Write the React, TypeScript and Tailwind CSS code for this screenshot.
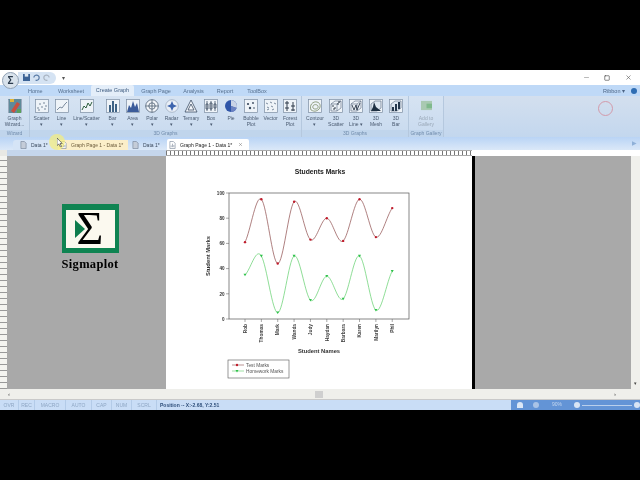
import { Minus, Square, X } from 'lucide-react';

const menuTabs = [
  { label: 'Home', w: 'w-[34px]', pl: 'pl-[18px]' },
  { label: 'Worksheet', w: 'w-[38px]', pl: '' },
];

function RibbonIcon({ kind }: { kind: string }) {
  const line = '#4a5f78';
  const frame = kind === 'pie' || kind === 'polar' || kind === 'radar' || kind === 'ternary' ? null : (
    <rect x="0.5" y="0.5" width="13" height="13" fill="#eef3f8" stroke="#7d8ea3" strokeWidth="0.7" />
  );
  return (
    <svg viewBox="0 0 14 14" className="w-[14px] h-[14px]">
      {frame}
      {kind === 'scatter' && [[3, 9], [5, 5], [7, 8], [9, 4], [11, 7], [4, 11], [10, 10]].map(([x, y], i) => <circle key={i} cx={x} cy={y} r="0.7" fill={line} />)}
      {kind === 'line' && <polyline points="2,11 5,8 7,9 10,5 12,3" fill="none" stroke={line} strokeWidth="0.7" />}
      {kind === 'linescatter' && <polyline points="2,11 4,7 6,9 8,4 10,7 12,3" fill="none" stroke="#2f5f3f" strokeWidth="1" />}
      {kind === 'bar' && <path d="M3 13V6h2v7zM6 13V2h2v11zM9 13V5h2v8z" fill="#3f6385" />}
      {kind === 'area' && <path d="M1 13L3 6l2 3 2-7 2 6 2-4 2 9z" fill="#3c5c9a" />}
      {kind === 'polar' && (
        <g fill="#f2f5f9" stroke="#3b4d63" strokeWidth="0.7">
          <circle cx="7" cy="7" r="6.3" />
          <circle cx="7" cy="7" r="3.2" />
          <path d="M7 .7v12.6M.7 7h12.6" />
        </g>
      )}
      {kind === 'radar' && (
        <g>
          <circle cx="7" cy="7" r="6.3" fill="#e8eef6" stroke="#8b9bb0" strokeWidth="0.6" />
          <path d="M7 2l1.5 3.5L12 7 8.5 8.5 7 12 5.5 8.5 2 7l3.5-1.5z" fill="#3d64ad" />
        </g>
      )}
      {kind === 'ternary' && <path d="M7 1L13 13H1zM7 5l3 6H4z" fill="#f3f6fa" stroke="#3b4d63" strokeWidth="0.8" />}
      {kind === 'box' && <path d="M3 2v10M7 2v10M11 2v10M2 5h2v5H2zM6 4h2v6H6zM10 5h2v4h-2z" fill="#fff" stroke="#3b4d63" strokeWidth="0.8" />}
      {kind === 'pie' && (
        <g>
          <circle cx="7" cy="7" r="6" fill="#2f55a8" />
          <path d="M7 7V1a6 6 0 0 1 5.6 8z" fill="#c9d3e6" />
          <path d="M7 7l5.6 2A6 6 0 0 1 7 13z" fill="#6b82c2" />
        </g>
      )}
      {kind === 'bubble' && [[4, 5, 1.1], [9, 4, 0.9], [6, 9, 1.2], [10, 9, 0.8]].map(([x, y, r], i) => <circle key={i} cx={x} cy={y} r={r} fill="#37475c" />)}
      {kind === 'vector' && <path d="M2 4l2 1M6 3l2 1M10 4l2 1M3 8l2 1M7 7l2 1M3 11l2-1M8 11l2-1" stroke={line} strokeWidth="0.7" />}
      {kind === 'forest' && <path d="M4 2v10M10 3v9M2 4h4M8 7h4M2 9h4M8 11h4" stroke="#2f3b4a" strokeWidth="1" />}
      {kind === 'contour' && <path d="M3 11C1 6 5 2 9 3s4 6 1 8-5 1-7 0zM5 9c-1-3 2-4 4-3s1 4-1 4-2 0-3-1z" fill="none" stroke="#6a7c50" strokeWidth="0.7" />}
      {kind === 'scatter3d' && (
        <g>
          <path d="M2 5l4-3h6v7l-4 3H2zM2 5h6v7M8 5l4-3" fill="none" stroke="#56677c" strokeWidth="0.6" />
          {[[4, 7], [6, 9], [9, 5], [5, 10], [10, 3]].map(([x, y], i) => <circle key={i} cx={x} cy={y} r="0.8" fill="#1f2a38" />)}
        </g>
      )}
      {kind === 'line3d' && (
        <g>
          <path d="M2 5l4-3h6v7l-4 3H2zM2 5h6v7M8 5l4-3" fill="none" stroke="#56677c" strokeWidth="0.6" />
          <path d="M3 6l2 5 2-5 1 5 3-7" fill="none" stroke="#2c3a4b" strokeWidth="0.9" />
        </g>
      )}
      {kind === 'mesh3d' && (
        <g>
          <path d="M2 5l4-3h6v7l-4 3H2z" fill="#dfe7f0" stroke="#56677c" strokeWidth="0.6" />
          <path d="M2 12l2-4 1-5 2 5 5 4z" fill="#1f3042" />
        </g>
      )}
      {kind === 'bar3d' && (
        <g>
          <path d="M2 5l4-3h6v7l-4 3H2z" fill="#dfe7f0" stroke="#56677c" strokeWidth="0.6" />
          <path d="M3 12V8h2v4zM6 12V5h2v7zM9 10V3h2v7z" fill="#26384c" />
        </g>
      )}
    </svg>
  );
}

function RibbonItem({ kind, lines, w }: { kind: string; lines: string[]; w: string }) {
  return (
    <div className={`${w} flex flex-col items-center pt-[3px] shrink-0`}>
      <RibbonIcon kind={kind} />
      <div className="mt-[2px] text-[5px] leading-[6px] text-[#4a5a70] text-center whitespace-nowrap">
        {lines.map((l) => <div key={l}>{l}</div>)}
      </div>
    </div>
  );
}

function RibbonGroup({ w, title, children }: { w: string; title: string; children: React.ReactNode }) {
  return (
    <div className={`${w} shrink-0 flex flex-col border-r border-[#b5c8de] bg-gradient-to-b from-[#d6e3f2] to-[#c8daef]`}>
      <div className="flex-1 flex">{children}</div>
      <div className="h-[7px] leading-[7px] text-[5px] text-center text-[#6f8bab] bg-[#c0d5ec]">{title}</div>
    </div>
  );
}

function DocIcon({ graph }: { graph?: boolean }) {
  return (
    <svg viewBox="0 0 8 9" className="w-[7px] h-[8px] shrink-0">
      <path d="M1 .5h4l2 2v6H1z" fill={graph ? '#fff' : '#c4ccd8'} stroke="#66758a" strokeWidth="0.6" />
      {graph && <path d="M2.5 7V5M4 7V3M5.5 7V4.5" stroke="#66758a" strokeWidth="0.6" />}
    </svg>
  );
}

const test = [61, 95, 44, 93, 63, 80, 62, 95, 65, 88];
const homework = [35, 50, 5, 50, 15, 34, 16, 50, 7, 38];
const names = ['Rob', 'Thomas', 'Mark', 'Wanda', 'Judy', 'Haydan', 'Barbara', 'Karen', 'Marilyn', 'Phil'];

// page coordinates: plot runs from x 63 to 243, y 37 to 163
const px = (i: number) => 79 + i * 16.36;
const py = (v: number) => 163 - v * 1.26;

function smooth(values: number[]) {
  let d = `M${px(0)} ${py(values[0])}`;
  for (let i = 0; i < values.length - 1; i++) {
    const p0 = values[Math.max(i - 1, 0)];
    const p1 = values[i];
    const p2 = values[i + 1];
    const p3 = values[Math.min(i + 2, values.length - 1)];
    const dx = 16.36 / 3;
    const c1 = py(p1 + (p2 - p0) / 4);
    const c2 = py(p2 - (p3 - p1) / 4);
    d += ` C${px(i) + dx} ${c1} ${px(i + 1) - dx} ${c2} ${px(i + 1)} ${py(p2)}`;
  }
  return d;
}

function Chart() {
  const sans = { fontFamily: '"Liberation Sans", Arial, sans-serif' };
  return (
    <svg viewBox="0 0 306 233" className="w-[306px] h-[233px] block" style={sans}>
      <text x="154" y="18" fontSize="6.8" fontWeight="bold" textAnchor="middle" fill="#222">Students Marks</text>
      <rect x="63" y="37" width="180" height="126" fill="#fff" stroke="#555" strokeWidth="0.7" />
      {[0, 20, 40, 60, 80, 100].map((v) => (
        <g key={v}>
          <line x1="60" x2="63" y1={py(v)} y2={py(v)} stroke="#555" strokeWidth="0.5" />
          <text x="58.5" y={py(v) + 1.7} fontSize="4.6" fontWeight="bold" textAnchor="end" fill="#333">{v}</text>
        </g>
      ))}
      <text transform="translate(44 100) rotate(-90)" fontSize="5.8" fontWeight="bold" textAnchor="middle" fill="#333">Student Marks</text>
      {names.map((n, i) => (
        <g key={n}>
          <line x1={px(i)} x2={px(i)} y1="163" y2="166" stroke="#555" strokeWidth="0.5" />
          <text transform={`translate(${px(i) + 1.7} 168) rotate(-90)`} fontSize="4.8" fontWeight="bold" textAnchor="end" fill="#444">{n}</text>
        </g>
      ))}
      <text x="153" y="197" fontSize="5.8" fontWeight="bold" textAnchor="middle" fill="#333">Student Names</text>
      <path d={smooth(test)} fill="none" stroke="#8c4a4a" strokeWidth="0.7" />
      <path d={smooth(homework)} fill="none" stroke="#5fcf6a" strokeWidth="0.7" />
      {test.map((v, i) => <circle key={i} cx={px(i)} cy={py(v)} r="1.2" fill="#c01c2c" />)}
      {homework.map((v, i) => <path key={i} d={`M${px(i) - 1.5} ${py(v) - 1.2}h3l-1.5 2.6z`} fill="#2ec24a" />)}
      <rect x="62" y="204" width="61" height="18" fill="#fff" stroke="#555" strokeWidth="0.6" />
      <line x1="66" x2="78" y1="209" y2="209" stroke="#8c4a4a" strokeWidth="0.6" />
      <circle cx="71" cy="209" r="1.2" fill="#c01c2c" />
      <text x="80" y="210.8" fontSize="4.8" fill="#555">Test Marks</text>
      <line x1="66" x2="78" y1="215" y2="215" stroke="#5fcf6a" strokeWidth="0.6" />
      <path d="M69.5 214h3L71 216.6z" fill="#2ec24a" />
      <text x="80" y="216.8" fontSize="4.8" fill="#555">Homework Marks</text>
    </svg>
  );
}

function Logo() {
  return (
    <div className="flex flex-col items-center w-[62px]">
      <div className="w-[57px] h-[49px] bg-[#0f8452] flex items-center justify-center">
        <div className="w-[49px] h-[38px] bg-[#fbf9ef] relative flex items-center justify-center overflow-hidden">
          <span className="text-[46px] leading-[38px] text-black" style={{ fontFamily: '"Liberation Serif", serif' }}>Σ</span>
          <svg viewBox="0 0 10 18" className="absolute left-[9px] top-[10px] w-[10px] h-[18px]">
            <path d="M0 0l10 9-10 9z" fill="#0f7d4e" />
          </svg>
        </div>
      </div>
      <div className="mt-[4px] text-[12.5px] leading-[14px] font-bold text-black tracking-[0.3px] whitespace-nowrap" style={{ fontFamily: '"Liberation Serif", serif' }}>Sigmaplot</div>
    </div>
  );
}

function StatusCell({ label, w }: { label: string; w: string }) {
  return <div className={`${w} shrink-0 text-center border-r border-[#b3cbe8] text-[5px] leading-[10px] text-[#8fa7c4]`}>{label}</div>;
}

export default function App() {
  return (
    <div className="relative w-[640px] h-[480px] bg-black overflow-hidden flex flex-col blur-[0.25px]" style={{ fontFamily: '"Liberation Sans", Arial, sans-serif' }}>
      <div className="h-[70px] shrink-0" />

      {/* title bar */}
      <div className="h-[15px] shrink-0 bg-white flex items-center pl-[18px]">
        <div className="w-[38px] h-[12px] rounded-r-full bg-[#d5e3f3] flex items-center pl-[5px] gap-[3px]">
          <svg viewBox="0 0 8 8" className="w-[7px] h-[7px]"><path d="M0 0h8v8H0z" fill="#3c6396" /><path d="M2 0h4v3H2z" fill="#dfe8f2" /></svg>
          <svg viewBox="0 0 8 8" className="w-[7px] h-[7px]"><path d="M1 4a3 3 0 1 1 2 3" fill="none" stroke="#5a7ba6" strokeWidth="1.4" /></svg>
          <svg viewBox="0 0 8 8" className="w-[7px] h-[7px]"><path d="M7 4a3 3 0 1 0-2 3" fill="none" stroke="#a9b4c2" strokeWidth="1.4" /></svg>
        </div>
        <span className="ml-[6px] text-[6px] leading-none text-[#555]">▾</span>
        <div className="flex-1" />
        <Minus className="w-[7px] h-[7px] text-[#888] mr-[14px]" />
        <Square className="w-[6px] h-[6px] text-[#444] mr-[15px]" strokeWidth={2.5} />
        <X className="w-[7px] h-[7px] text-[#555] mr-[8px]" />
      </div>

      {/* menu tabs */}
      <div className="h-[11px] shrink-0 bg-[#bfd9f7] flex items-end text-[5.5px] text-[#56708f] leading-[10px]">
        <div className="w-[51px] pl-[28px]">{menuTabs[0].label}</div>
        <div className="w-[40px] text-center">{menuTabs[1].label}</div>
        <div className="w-[43px] h-[11px] text-center bg-[#e4eef9] rounded-t-[2px] leading-[11px] text-[#3f5c80]">Create Graph</div>
        <div className="w-[44px] text-center">Graph Page</div>
        <div className="w-[31px] text-center">Analysis</div>
        <div className="w-[32px] text-center">Report</div>
        <div className="w-[32px] text-center">ToolBox</div>
        <div className="flex-1" />
        <div className="mr-[6px] text-[#4d6586]">Ribbon ▾</div>
        <div className="w-[6px] h-[6px] rounded-full bg-[#2f6db3] mb-[2px] mr-[3px]" />
      </div>

      {/* ribbon */}
      <div className="h-[41px] shrink-0 flex bg-gradient-to-b from-[#d3dfee] to-[#c3d7ee]">
        <RibbonGroup w="w-[30px]" title="Wizard">
          <RibbonItem kind="wizard" lines={['Graph', 'Wizard...']} w="w-[29px]" />
        </RibbonGroup>
        <RibbonGroup w="w-[272px]" title="3D Graphs">
          <div className="w-[1px]" />
          <RibbonItem kind="scatter" lines={['Scatter', '▾']} w="w-[21px]" />
          <RibbonItem kind="line" lines={['Line', '▾']} w="w-[19px]" />
          <RibbonItem kind="linescatter" lines={['Line/Scatter', '▾']} w="w-[31px]" />
          <RibbonItem kind="bar" lines={['Bar', '▾']} w="w-[21px]" />
          <RibbonItem kind="area" lines={['Area', '▾']} w="w-[19px]" />
          <RibbonItem kind="polar" lines={['Polar', '▾']} w="w-[20px]" />
          <RibbonItem kind="radar" lines={['Radar', '▾']} w="w-[19px]" />
          <RibbonItem kind="ternary" lines={['Ternary', '▾']} w="w-[20px]" />
          <RibbonItem kind="box" lines={['Box', '▾']} w="w-[20px]" />
          <RibbonItem kind="pie" lines={['Pie']} w="w-[20px]" />
          <RibbonItem kind="bubble" lines={['Bubble', 'Plot']} w="w-[20px]" />
          <RibbonItem kind="vector" lines={['Vector']} w="w-[19px]" />
          <RibbonItem kind="forest" lines={['Forest', 'Plot']} w="w-[20px]" />
        </RibbonGroup>
        <RibbonGroup w="w-[107px]" title="3D Graphs">
          <div className="w-[2px]" />
          <RibbonItem kind="contour" lines={['Contour', '▾']} w="w-[22px]" />
          <RibbonItem kind="scatter3d" lines={['3D', 'Scatter']} w="w-[20px]" />
          <RibbonItem kind="line3d" lines={['3D', 'Line ▾']} w="w-[20px]" />
          <RibbonItem kind="mesh3d" lines={['3D', 'Mesh']} w="w-[20px]" />
          <RibbonItem kind="bar3d" lines={['3D', 'Bar']} w="w-[20px]" />
        </RibbonGroup>
        <RibbonGroup w="w-[35px]" title="Graph Gallery">
          <div className="w-full flex flex-col items-center pt-[4px]">
            <svg viewBox="0 0 14 12" className="w-[13px] h-[11px]">
              <path d="M1 1h12v10H1z" fill="#a9c9b2" />
              <path d="M7 4h6v5H7z" fill="#7fb98c" />
            </svg>
            <div className="mt-[4px] text-[5px] leading-[6px] text-[#9aa8b8] text-center">Add to<br />Gallery</div>
          </div>
        </RibbonGroup>
      </div>

      {/* document tabs */}
      <div className="h-[13px] shrink-0 flex items-end bg-gradient-to-b from-[#b9d4f5] to-[#dbe8f8] text-[5px] leading-[10px] text-[#3b4a5e] pl-[13px]">
        <div className="w-[42px] h-[10px] pl-[7px] flex items-center gap-[4px] bg-[#d5e4f6] rounded-t-[3px]"><DocIcon />Data 1*</div>
        <div className="w-[3px]" />
        <div className="w-[70px] h-[10px] pl-[2px] flex items-center gap-[4px] bg-[#fbeec9] text-[#6b5a3a]"><DocIcon graph />Graph Page 1 - Data 1*</div>
        <div className="w-[3px]" />
        <div className="w-[36px] h-[10px] pl-[1px] flex items-center gap-[4px]"><DocIcon />Data 1*</div>
        <div className="w-[82px] h-[11px] pl-[2px] flex items-center gap-[4px] bg-white rounded-t-[2px] text-[#222]">
          <DocIcon graph />Graph Page 1 - Data 1*
          <X className="w-[5px] h-[5px] text-[#666] ml-[2px]" />
        </div>
        <div className="flex-1" />
        <div className="mb-[2px] mr-[3px] text-[6px] text-[#8fb0d8]">▶</div>
      </div>

      {/* top ruler */}
      <div className="h-[6px] shrink-0 flex bg-white">
        <div className="w-[7px] bg-[#e8e8e4]" />
        <div className="w-[159px] bg-[#c5d6ec]" />
        <div
          className="w-[306px] bg-[repeating-linear-gradient(90deg,#777_0,#777_1px,#fff_1px,#fff_4px)] border-y border-[#aaa]"
        />
        <div className="flex-1 bg-white" />
      </div>

      {/* work area */}
      <div className="h-[233px] shrink-0 flex">
        <div className="w-[7px] shrink-0 bg-[repeating-linear-gradient(0deg,#999_0,#999_1px,#f4f4f0_1px,#f4f4f0_6px)]" />
        <div className="w-[159px] shrink-0 bg-[#a9a9a9] pt-[48px] pl-[52px]">
          <Logo />
        </div>
        <div className="w-[306px] shrink-0 bg-white">
          <Chart />
        </div>
        <div className="w-[3px] shrink-0 bg-black" />
        <div className="flex-1 bg-[#a9a9a9]" />
        <div className="w-[9px] shrink-0 bg-[#f0f0ec] flex flex-col justify-end items-center text-[5px] text-[#444] pb-[2px]">▾</div>
      </div>

      {/* bottom scrollbar */}
      <div className="h-[11px] shrink-0 bg-[#efefeb] flex items-center border-b border-[#c9c9c9]">
        <div className="w-[10px] text-right text-[6px] leading-none text-[#444]">‹</div>
        <div className="w-[305px]" />
        <div className="w-[8px] h-[7px] bg-[#cfcfcf]" />
        <div className="flex-1" />
        <div className="mr-[24px] text-[6px] leading-none text-[#444]">›</div>
      </div>

      {/* status bar */}
      <div className="h-[10px] shrink-0 flex items-center bg-[#c9ddf6]">
        <StatusCell label="OVR" w="w-[19px]" />
        <StatusCell label="REC" w="w-[16px]" />
        <StatusCell label="MACRO" w="w-[31px]" />
        <StatusCell label="AUTO" w="w-[26px]" />
        <StatusCell label="CAP" w="w-[20px]" />
        <StatusCell label="NUM" w="w-[20px]" />
        <StatusCell label="SCRL" w="w-[25px]" />
        <div className="w-[75px] pl-[3px] text-[5px] leading-[10px] text-[#2f4f7a] font-bold whitespace-nowrap">Position -- X:-2.68, Y:2.51</div>
        <div className="w-[286px]" />
        <div className="flex-1 h-[10px] bg-[#6394d6] flex items-center pl-[6px] text-[5px] text-[#c6d8f0]">
          <div className="w-[6px] h-[6px] rounded-t-full bg-[#dbe7f6]" />
          <div className="w-[6px] h-[6px] rounded-full bg-[#a9c3e6] ml-[10px]" />
          <div className="ml-[13px]">90%</div>
          <div className="ml-[12px] w-[6px] h-[6px] rounded-full bg-[#d8e5f5]" />
          <div className="ml-[2px] w-[50px] h-[1px] bg-[#b9cfeb]" />
          <div className="ml-[2px] w-[6px] h-[6px] rounded-full bg-[#d8e5f5]" />
        </div>
      </div>
      <div className="flex-1" />

      {/* overlays: application button, mouse highlight, click ring */}
      <div className="absolute left-[2px] top-[72px] w-[17px] h-[17px] rounded-full bg-[#d8e2ec] border border-[#8fa0b4] flex items-center justify-center text-[10px] font-bold text-[#2a3a4c]">Σ</div>
      <div className="absolute left-[49px] top-[134px] w-[16px] h-[16px] rounded-full bg-[#f6ee7a]/70" />
      <svg viewBox="0 0 8 12" className="absolute left-[57px] top-[138px] w-[6px] h-[9px]"><path d="M0 0v10l2.5-2 2 4 1.5-.7-2-4H7z" fill="#fff" stroke="#333" strokeWidth="0.8" /></svg>
      <div className="absolute left-[598px] top-[101px] w-[15px] h-[15px] rounded-full border border-[#d39aaa]" />
      <svg viewBox="0 0 14 16" className="absolute left-[8px] top-[98px] w-[14px] h-[16px]">
        <path d="M1 1h12v14H1z" fill="#5f8a9a" />
        <path d="M3 13L9 4l3 2-6 9z" fill="#c9503f" />
        <path d="M2 1h4v3H2z" fill="#e0b53a" />
        <path d="M9 11h4v4H9z" fill="#5aa05a" />
      </svg>
    </div>
  );
}
